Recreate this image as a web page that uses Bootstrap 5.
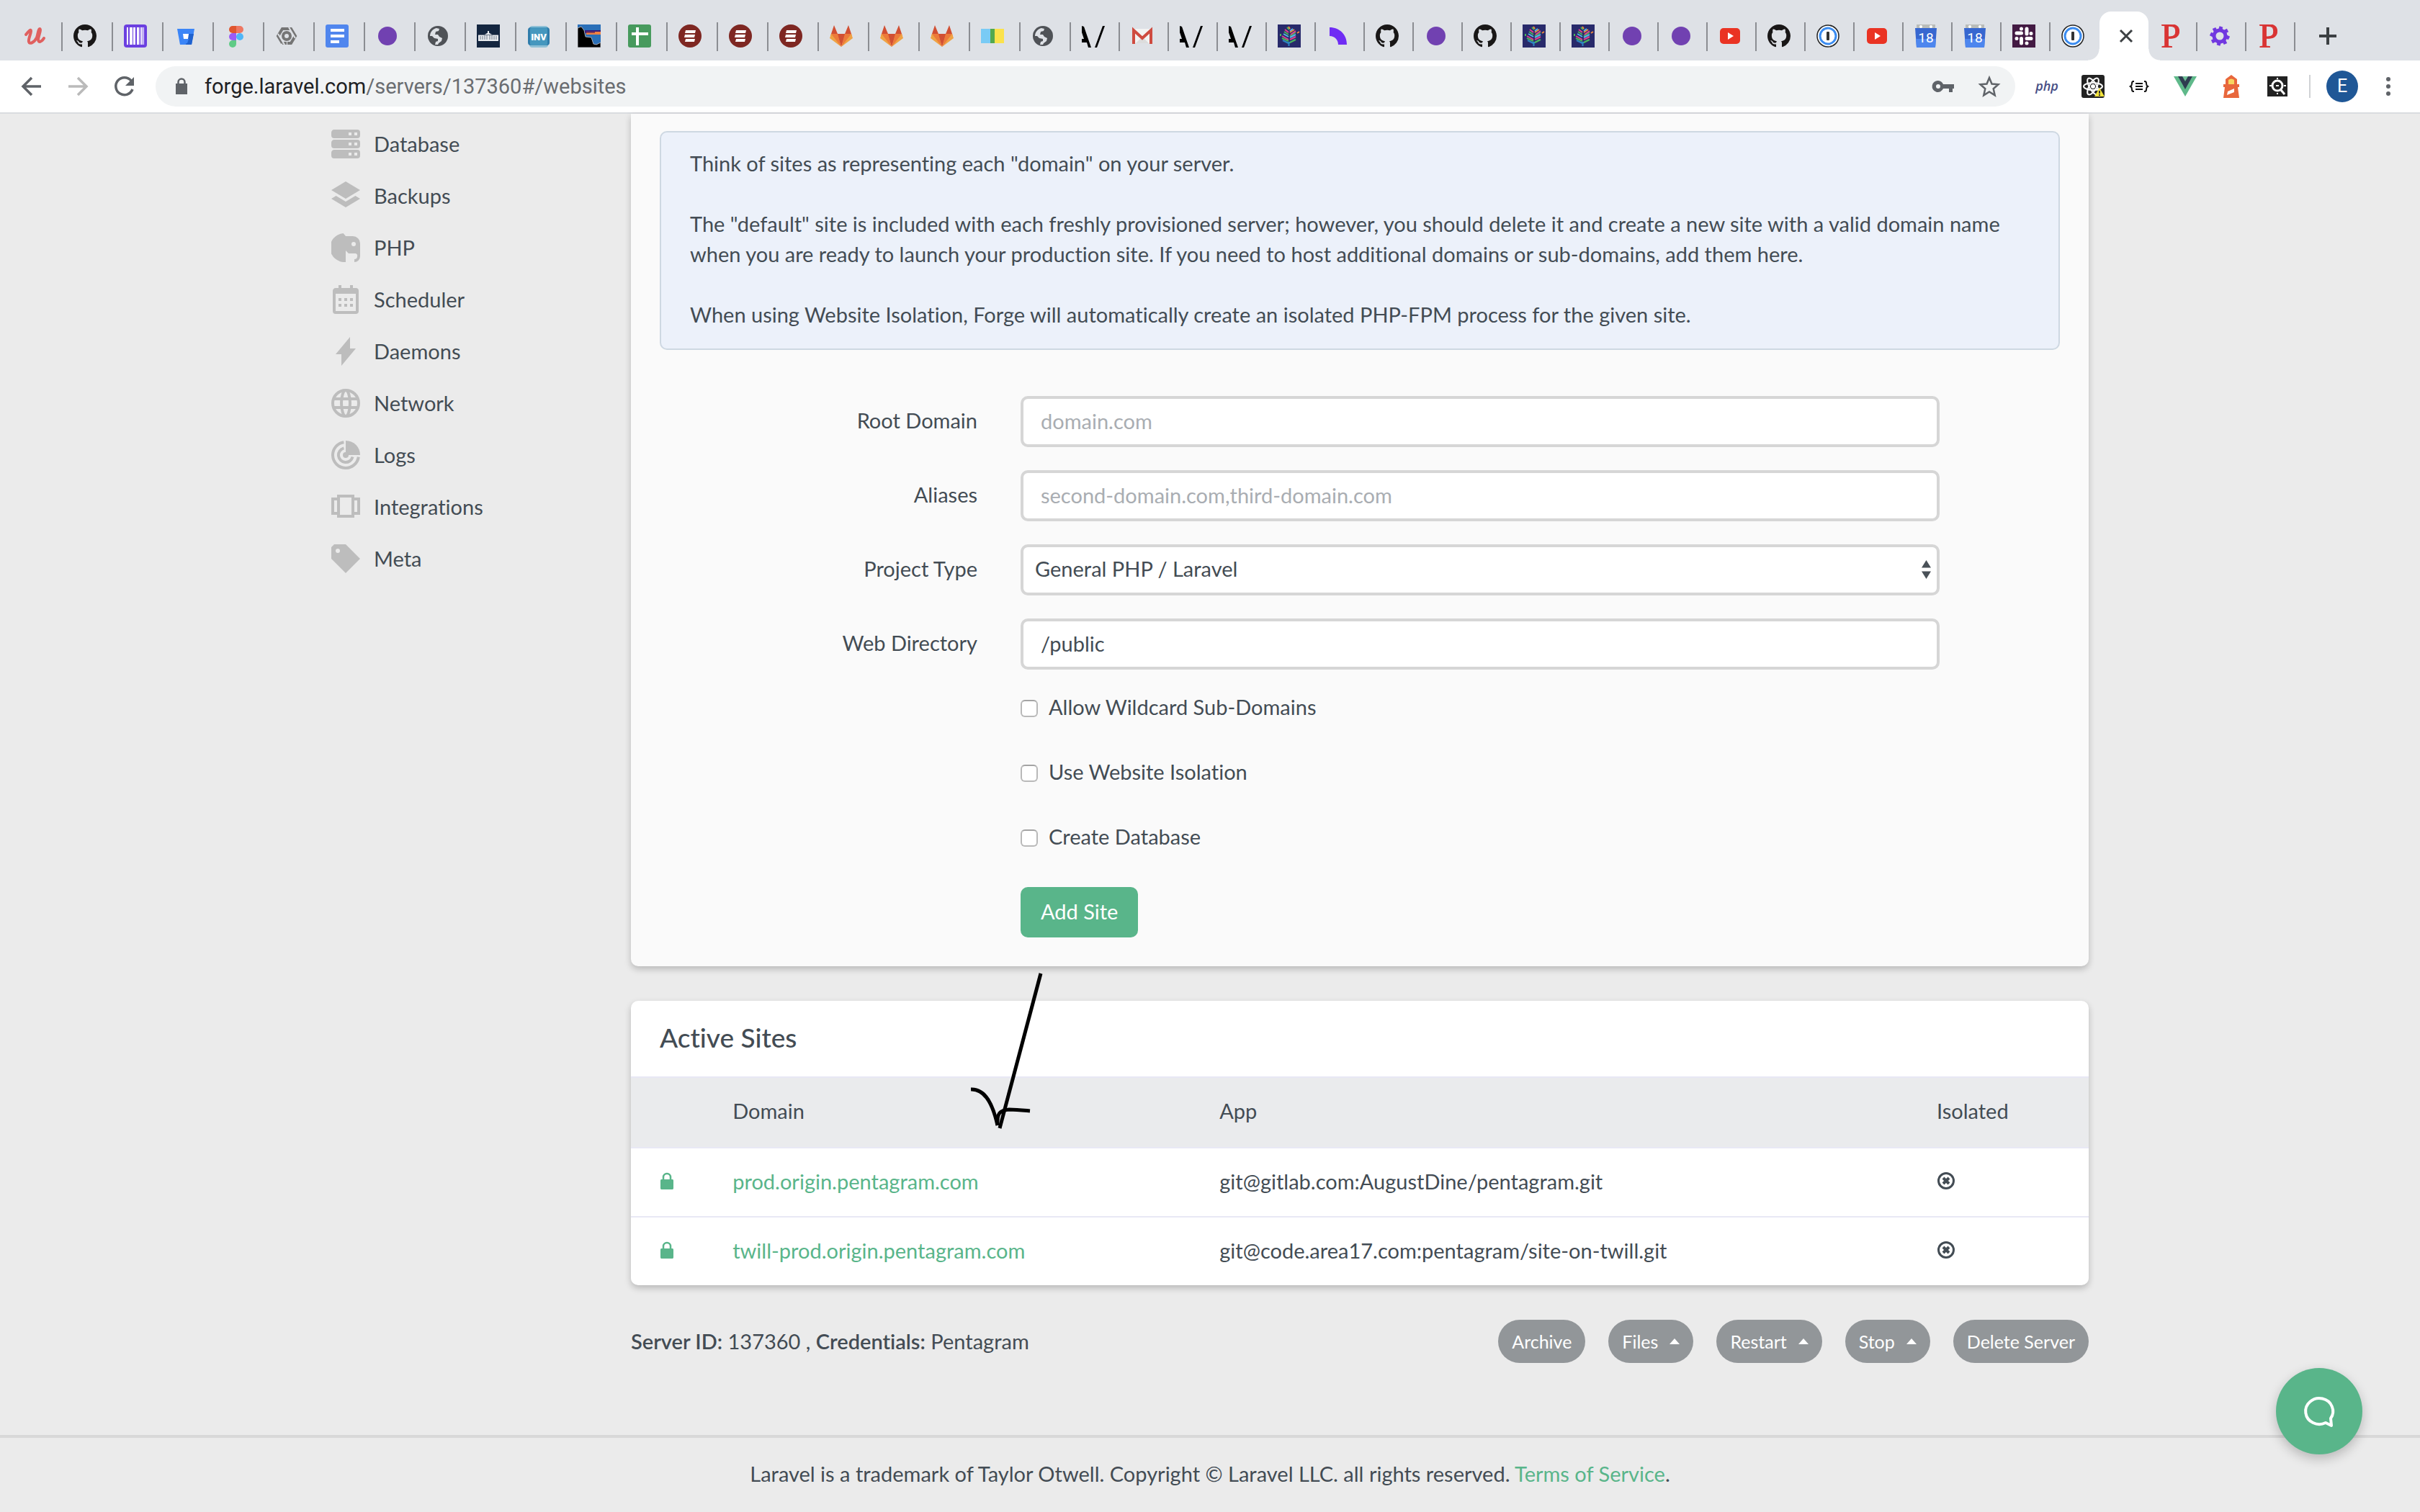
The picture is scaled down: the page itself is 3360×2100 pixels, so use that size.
<!DOCTYPE html>
<html lang="en">
<head>
<meta charset="utf-8">
<meta name="viewport" content="width=device-width, initial-scale=1">
<title>Laravel Forge</title>
<link href="https://cdn.jsdelivr.net/npm/bootstrap@5.3.0/dist/css/bootstrap.min.css" rel="stylesheet">
<style>
:root { --ink: #434c54; --green: #59b58a; --page: #ebebeb; --strip: #dee1e6; }
body { background: var(--page); color: var(--ink); font: 29px/42px Lato, "Open Sans", sans-serif; font-variant-ligatures: none; }
a { color: var(--green); text-decoration: none; }

/* browser window */
.tab-strip { background: var(--strip); height: 84px; padding-left: 17px; }
.tab-item { width: 70px; height: 40px; margin-top: 31px; padding-left: 15px; border-right: 2px solid #8b8d92; flex: none; display: flex; align-items: center; }
.tab-item svg { width: 32px; height: 32px; flex: none; margin-top: -2px; }
.tab-item.slim { width: 68px; }
.tab-item.no-sep { border-color: transparent; }
.tab-open { width: 68px; height: 68px; margin-top: 16px; background: #fff; border: 0; border-radius: 16px 16px 0 0; position: relative; flex: none; padding: 0; color: #3c4043; }
.tab-open::before, .tab-open::after { content: ""; position: absolute; bottom: 0; width: 16px; height: 16px; }
.tab-open::before { right: 100%; background: radial-gradient(circle at 0 0, transparent 15px, #fff 16px); }
.tab-open::after { left: 100%; background: radial-gradient(circle at 100% 0, transparent 15px, #fff 16px); }
.tab-new { height: 40px; margin: 30px 0 0 29px; }
.bare { background: none; border: 0; padding: 0; display: flex; align-items: center; justify-content: center; flex: none; }
.tool-row { background: #fff; height: 74px; border-bottom: 2px solid #dadce0; padding: 0 24px 0 24px; }
.nav-tools { width: 192px; gap: 24px; color: #5f6368; }
.nav-tools svg, .ext-tools svg { width: 40px; height: 40px; }
.omnibox { background: #f1f3f4; height: 56px; border-radius: 28px; padding: 0 16px 0 24px; gap: 20px; color: #5f6368; }
.omnibox .url { font-family: Roboto, "Open Sans", sans-serif; font-size: 29px; color: #6a6d71; }
.omnibox .url b { font-weight: 400; color: #202124; }
.omnibox svg { width: 40px; height: 40px; flex: none; }
.omnibox .padlock { width: 24px; }
.ext-tools { padding-left: 24px; gap: 24px; }
.ext-tools .rule { width: 2px; height: 32px; background: #d0d2d5; }
.avatar-btn { width: 44px; height: 44px; margin: 0 -2px; border-radius: 50%; background: #1f5796; color: #fff; font: 25px/44px Roboto, sans-serif; }

/* app */
.site-wrap { max-width: 2440px; }
.side-menu { width: 416px; flex: none; padding-top: 6px; }
.side-menu a { color: var(--ink); height: 72px; gap: 19px; }
.side-menu svg { width: 40px; height: 40px; fill: #bdbdbd; }
.panel { border-radius: 10px; box-shadow: 0 4px 10px rgba(0,0,0,.22); }
.panel-form { background: #fafafa; border-radius: 0 0 10px 10px; padding: 24px 40px 40px; }
.note { background: #ecf1fa; border: 2px solid #ced8e2; border-radius: 10px; padding: 22px 40px 26px; margin-bottom: 64px; }
.note p { margin-bottom: 42px; }
.form-grid .row { --bs-gutter-x: 60px; margin-bottom: 32px; }
.form-grid .col-form-label { padding-top: 12px; padding-bottom: 0; text-align: right; }
.form-grid .form-control, .form-grid .form-select { height: 71px; border: 4px solid #d6d6d6; border-radius: 10px; padding: 0 24px 3px; background-color: #fff; color: var(--ink); font-size: 29px; line-height: 42px; }
.form-grid .form-control::placeholder { color: #a9adb2; opacity: 1; }
.form-grid .form-select { padding: 0 16px 3px; background-image: none; }
.select-box { position: relative; }
.select-box svg { position: absolute; right: 12px; top: 22px; width: 13px; height: 26px; fill: #4a5158; pointer-events: none; }
.tick-line { height: 42px; margin-bottom: 48px; gap: 15px; }
.tick-line label { padding-bottom: 2px; }
.tick-line .form-check-input { width: 24px; height: 24px; margin: 2px 0 0; border: 2px solid #b9b9b9; border-top-color: #a3a3a3; border-radius: 6px; background: #fff; }
.btn-add { background: var(--green); color: #fff; border: 0; border-radius: 10px; height: 70px; padding: 0 28px 2px; font-size: 29px; line-height: 42px; }
.panel-sites { background: #fff; margin-top: 48px; position: relative; }
.panel-sites h2 { font-size: 37px; line-height: 42px; padding: 30px 40px 33px; margin: 0; }
.site-table { table-layout: fixed; margin: 0; color: var(--ink); --bs-table-bg: transparent; }
.site-table th, .site-table td { font-weight: 400; padding: 25px 0 27px 40px; border: 0; border-top: 2px solid #e8e8f5; color: var(--ink); line-height: 42px; }
.site-table thead th { background: #eaebed; border-bottom: 2px solid #e8e8f5; padding: 25px 0 29px 40px; }
.site-table tbody tr:first-child td { border-top: 0; }
.site-table svg { display: block; margin: 8px 0 10px; }
.site-table th:last-child { padding-left: 39px; }
.arrow-mark { position: absolute; left: 472px; top: -40px; width: 100px; height: 220px; pointer-events: none; }
.server-bar { margin-top: 48px; gap: 32px; }
.server-bar .btn { background: #929699; color: #fff; height: 60px; border: 0; border-radius: 30px; padding: 0 19px; font-size: 25px; line-height: 42px; display: flex; align-items: center; gap: 16px; }
.server-bar .btn svg { width: 14px; height: 8px; fill: #fff; }
.legal { border-top: 4px solid #d8d8d8; margin-top: 100px; padding: 29px 0; }
.chat-btn { position: fixed; right: 80px; bottom: 80px; width: 120px; height: 120px; border-radius: 50%; background: var(--green); border: 0; box-shadow: 0 6px 16px rgba(0,0,0,.22); padding: 0; }
</style>
<script src="https://cdn.jsdelivr.net/npm/bootstrap@5.3.0/dist/js/bootstrap.bundle.min.js"></script>
</head>
<body>

<svg class="d-none" aria-hidden="true">
  <symbol id="f-udemy" viewBox="0 0 32 32"><path d="M4 14C8 9 11 6 11 9c0 4-4 11-3 15 1 4 8 1 11-6 2-5 2-12 4-12 3 0-2 11-2 15 0 5 5 3 8-2" fill="none" stroke="#e0605f" stroke-width="4" stroke-linecap="round" stroke-linejoin="round"/></symbol>
  <symbol id="f-github" viewBox="0 0 16 16"><path fill="#191717" d="M8 0C3.58 0 0 3.58 0 8c0 3.54 2.29 6.53 5.47 7.59.4.07.55-.17.55-.38 0-.19-.01-.82-.01-1.49-2.01.37-2.53-.49-2.69-.94-.09-.23-.48-.94-.82-1.13-.28-.15-.68-.52-.01-.53.63-.01 1.08.58 1.23.82.72 1.21 1.87.87 2.33.66.07-.52.28-.87.51-1.07-1.78-.2-3.64-.89-3.64-3.95 0-.87.31-1.59.82-2.15-.08-.2-.36-1.02.08-2.12 0 0 .67-.21 2.2.82.64-.18 1.32-.27 2-.27s1.36.09 2 .27c1.53-1.04 2.2-.82 2.2-.82.44 1.1.16 1.92.08 2.12.51.56.82 1.27.82 2.15 0 3.07-1.87 3.75-3.65 3.95.29.25.54.73.54 1.48 0 1.07-.01 1.93-.01 2.2 0 .21.15.46.55.38A8.01 8.01 0 0 0 16 8c0-4.42-3.58-8-8-8z"/></symbol>
  <symbol id="f-bars" viewBox="0 0 32 32"><rect width="32" height="32" rx="4" fill="#6b3fe0"/><path fill="#fff" d="M4 4h2v24H4zM8 4h4v24H8zM13 4h3v24h-3zM18 4h3v24h-3zM22 4h1v24h-1zM24 4h2v24h-2zM27 4h1v24h-1z"/></symbol>
  <symbol id="f-bitbucket" viewBox="0 0 32 32"><path fill="#3b85f7" d="M4 6h24l-4 22H8z"/><path fill="#1f62cf" d="M20 13h7l-3 15h-8z"/><path fill="#3b85f7" d="M9 20h11l-2 6h-8z"/><path fill="#fff" d="M12 13h8l-1 7h-6z"/></symbol>
  <symbol id="f-figma" viewBox="0 0 32 32"><path fill="#e0562f" d="M16 2h-5a5 5 0 0 0 0 10h5z"/><path fill="#ee7762" d="M16 2h5a5 5 0 0 1 0 10h-5z"/><path fill="#9b5cf6" d="M16 12h-5a5 5 0 0 0 0 10h5z"/><circle cx="21" cy="17" r="5" fill="#4fb6f8"/><path fill="#5fcb86" d="M16 22h-5a5 5 0 1 0 5 5z"/></symbol>
  <symbol id="f-hex" viewBox="0 0 32 32"><g fill="none" stroke="#757575" stroke-width="4"><path d="M15 6H10L4 16l6 10M17 26h5l6-10-6-10H11M10 26h6"/><circle cx="16" cy="16" r="5"/></g><path stroke="#dee1e6" stroke-width="2" d="M19 4l9 15M13 28 4 13"/></symbol>
  <symbol id="f-docs" viewBox="0 0 32 32"><rect width="32" height="32" rx="3" fill="#5086ee"/><path fill="#fff" d="M7 6h19v4H7zM7 14h19v4H7zM7 22h12v4H7z"/></symbol>
  <symbol id="f-dot" viewBox="0 0 32 32"><circle cx="16" cy="16" r="13" fill="#7141b1"/></symbol>
  <symbol id="f-globe" viewBox="0 0 32 32"><circle cx="16" cy="16" r="14" fill="#4f5257"/><path fill="#dee1e6" d="M5 16c0-5 4-10 9-11l4 1-1 3-4 1-1 4h4l2 3 4 2-1 4-4 3-1 2h-4l1-4 3-1v-3l-5-1-3-3z"/></symbol>
  <symbol id="f-house" viewBox="0 0 32 32"><path fill="#142640" d="M0 0h32v32H0z"/><path fill="#e8ebef" d="M2 14h9l5-3 5 3h9v9H2zM15 9h2v3h-2z"/><path stroke="#6b7686" d="M5 16v5M8 16v5M11 15v6M14 15v6M18 15v6M21 15v6M24 16v5M27 16v5M2 14.500h28"/></symbol>
  <symbol id="f-inv" viewBox="0 0 32 32"><rect x="3" y="2" width="26" height="30" rx="4" fill="#8fc0d6"/><rect x="1" y="4" width="30" height="25" rx="4" fill="#2f7cab"/><rect x="4" y="4" width="24" height="25" rx="2" fill="#4597be"/><text x="16" y="22" text-anchor="middle" font-family="Roboto" font-weight="900" font-size="13" fill="#fff">INV</text></symbol>
  <symbol id="f-ridge" viewBox="0 0 32 32"><path fill="#2a6fb8" d="M0 0h32v32H0z"/><path fill="#351a7c" d="M10 8h22v4H10z"/><path fill="#ef8144" d="M12 10h20v4H12z"/><path fill="#8a3b54" d="M12 10h12v2H12z"/><path d="M0 5l5-2 4 5 2 9 8 1 3 9 4 1 6-3v7H0z" stroke="#a8a8b0"/></symbol>
  <symbol id="f-sheet" viewBox="0 0 32 32"><rect width="32" height="32" rx="3" fill="#479a5d"/><path fill="#fff" d="M11 4h4v25h-4zM5 11h23v4H5z"/></symbol>
  <symbol id="f-red" viewBox="0 0 32 32"><circle cx="16" cy="16" r="16" fill="#7e2722"/><path fill="#fff" d="M10 8h14l-1 4H9zM9 14h14l-1 4H8zM10 20h13l-1 4H9z"/></symbol>
  <symbol id="f-gitlab" viewBox="0 0 32 32"><path fill="#d14f33" d="M6 1l5 12H2zM26 1l4 12h-9zM10 13h12l-6 18z"/><path fill="#ec7a3b" d="M2 13h9l5 18L1 16zM30 13h-9l-5 18 15-15z"/><path fill="#efa345" d="M2 13l-2 6 16 12zM30 13l2 6-16 12z"/></symbol>
  <symbol id="f-flag" viewBox="0 0 32 32"><path fill="#79cbf5" d="M0 6h13v20H0z"/><path fill="#53a94f" d="M13 6h6v20h-6z"/><path fill="#fbe24c" d="M19 6h13v20H19z"/></symbol>
  <symbol id="f-slashes" viewBox="0 0 32 32"><path d="M0 2l3 1 10 29H9L7 25H0v-5h3L0 11zM29 2h3L21 32h-3z"/></symbol>
  <symbol id="f-gmail" viewBox="0 0 32 32"><path fill="#f3f3f3" d="M3 6h26v20H3z"/><path fill="#dcdcdc" d="M7 26l9-9 9 9z"/><path fill="none" stroke="#cf4b40" stroke-width="4" d="M4 27V8l12 11L28 8v19"/></symbol>
  <symbol id="f-tree" viewBox="0 0 32 32"><path fill="#282a6b" d="M0 0h32v32H0z"/><g fill="none" stroke-width="2"><path stroke="#2d86c4" d="M15.500 30v-6M7 22l8 4 9-5"/><path stroke="#4cb35a" d="M4 13v3M6 19l9 4M17 25l8-4M9 10l6 4M17 16l8-5M13 4l3 3"/><path stroke="#e0418f" d="M6 16l9 5M17 21l8-4M10 7l5 4M18 14l7-5"/><path stroke="#f08a3c" d="M15 3l2 3M17 11l6-4M27 12l3-2"/><path stroke="#57b7e8" d="M8 13l7 4M17 9l4-3M17 18l8-4"/></g></symbol>
  <symbol id="f-arc" viewBox="0 0 32 32"><path fill="#6f2cf4" d="M4 4c14 0 24 10 24 24H16c0-7-5-12-12-12z"/></symbol>
  <symbol id="f-video" viewBox="0 0 32 32"><rect x="2" y="5" width="28" height="22" rx="5" fill="#ea3323"/><path fill="#fff" d="M13 11l8 5-8 5z"/></symbol>
  <symbol id="f-onepass" viewBox="0 0 32 32"><circle cx="16" cy="16" r="15" fill="#fff" stroke="#222" stroke-width="1.500"/><circle cx="16" cy="16" r="11" fill="#fff" stroke="#3b8cf0" stroke-width="3"/><rect x="14" y="10" width="4" height="12" rx="1" fill="#333"/></symbol>
  <symbol id="f-cal" viewBox="0 0 32 32"><path fill="#b9bcb9" d="M3 0h26v6H3z"/><circle cx="9" cy="3" r="2" fill="#fff"/><circle cx="23" cy="3" r="2" fill="#fff"/><path fill="#3767d0" d="M1 5h30l-2 27H3z"/><path fill="#4d86ee" d="M2 20h28l-1 12H3z"/><text x="16" y="25" text-anchor="middle" font-family="Roboto" font-size="19" fill="#fff">18</text></symbol>
  <symbol id="f-slack" viewBox="0 0 32 32"><path fill="#431a43" d="M0 0h32v32H0z"/><g stroke="#fff" stroke-width="5" stroke-linecap="round"><path d="M12.500 6v0M12.500 12H6M20 6v7M26 12.500v0M6 19.500v0M12.500 19.500V26M20 19.500h6M20 26v0"/></g></symbol>
  <symbol id="f-p" viewBox="0 0 32 32"><text x="16" y="32" text-anchor="middle" font-family="Liberation Serif" font-size="49" fill="#d93434" stroke="#d93434">P</text></symbol>
  <symbol id="f-pinwheel" viewBox="0 0 32 32"><g fill="none" stroke="#7138e0" stroke-width="5"><circle cx="16" cy="16" r="8"/><path d="M16 9l2-6M21 11l6-3M23 16l6 3M21 21l3 6M16 23l-2 6M11 21l-6 3M9 16l-6-3M11 11L8 5"/></g></symbol>
</svg>

<header>
  <nav class="tab-strip d-flex" aria-label="Open tabs">
    <a class="tab-item" href="#"><svg><use href="#f-udemy"/></svg></a>
    <a class="tab-item" href="#"><svg><use href="#f-github"/></svg></a>
    <a class="tab-item" href="#"><svg><use href="#f-bars"/></svg></a>
    <a class="tab-item" href="#"><svg><use href="#f-bitbucket"/></svg></a>
    <a class="tab-item" href="#"><svg><use href="#f-figma"/></svg></a>
    <a class="tab-item" href="#"><svg><use href="#f-hex"/></svg></a>
    <a class="tab-item" href="#"><svg><use href="#f-docs"/></svg></a>
    <a class="tab-item" href="#"><svg><use href="#f-dot"/></svg></a>
    <a class="tab-item" href="#"><svg><use href="#f-globe"/></svg></a>
    <a class="tab-item" href="#"><svg><use href="#f-house"/></svg></a>
    <a class="tab-item" href="#"><svg><use href="#f-inv"/></svg></a>
    <a class="tab-item" href="#"><svg><use href="#f-ridge"/></svg></a>
    <a class="tab-item" href="#"><svg><use href="#f-sheet"/></svg></a>
    <a class="tab-item" href="#"><svg><use href="#f-red"/></svg></a>
    <a class="tab-item" href="#"><svg><use href="#f-red"/></svg></a>
    <a class="tab-item" href="#"><svg><use href="#f-red"/></svg></a>
    <a class="tab-item" href="#"><svg><use href="#f-gitlab"/></svg></a>
    <a class="tab-item" href="#"><svg><use href="#f-gitlab"/></svg></a>
    <a class="tab-item" href="#"><svg><use href="#f-gitlab"/></svg></a>
    <a class="tab-item" href="#"><svg><use href="#f-flag"/></svg></a>
    <a class="tab-item" href="#"><svg><use href="#f-globe"/></svg></a>
    <a class="tab-item slim" href="#"><svg><use href="#f-slashes"/></svg></a>
    <a class="tab-item slim" href="#"><svg><use href="#f-gmail"/></svg></a>
    <a class="tab-item slim" href="#"><svg><use href="#f-slashes"/></svg></a>
    <a class="tab-item slim" href="#"><svg><use href="#f-slashes"/></svg></a>
    <a class="tab-item slim" href="#"><svg><use href="#f-tree"/></svg></a>
    <a class="tab-item slim" href="#"><svg><use href="#f-arc"/></svg></a>
    <a class="tab-item slim" href="#"><svg><use href="#f-github"/></svg></a>
    <a class="tab-item slim" href="#"><svg><use href="#f-dot"/></svg></a>
    <a class="tab-item slim" href="#"><svg><use href="#f-github"/></svg></a>
    <a class="tab-item slim" href="#"><svg><use href="#f-tree"/></svg></a>
    <a class="tab-item slim" href="#"><svg><use href="#f-tree"/></svg></a>
    <a class="tab-item slim" href="#"><svg><use href="#f-dot"/></svg></a>
    <a class="tab-item slim" href="#"><svg><use href="#f-dot"/></svg></a>
    <a class="tab-item slim" href="#"><svg><use href="#f-video"/></svg></a>
    <a class="tab-item slim" href="#"><svg><use href="#f-github"/></svg></a>
    <a class="tab-item slim" href="#"><svg><use href="#f-onepass"/></svg></a>
    <a class="tab-item slim" href="#"><svg><use href="#f-video"/></svg></a>
    <a class="tab-item slim" href="#"><svg><use href="#f-cal"/></svg></a>
    <a class="tab-item slim" href="#"><svg><use href="#f-cal"/></svg></a>
    <a class="tab-item slim" href="#"><svg><use href="#f-slack"/></svg></a>
    <a class="tab-item slim no-sep" href="#"><svg><use href="#f-onepass"/></svg></a>
    <button class="tab-open d-flex align-items-center justify-content-center" type="button" aria-label="Close tab"><svg width="40" height="32" viewBox="0 0 40 32"><path d="M15 8l16 16M31 8L15 24" stroke="currentColor" stroke-width="3"/></svg></button>
    <a class="tab-item slim" href="#"><svg><use href="#f-p"/></svg></a>
    <a class="tab-item slim" href="#"><svg><use href="#f-pinwheel"/></svg></a>
    <a class="tab-item slim" href="#"><svg><use href="#f-p"/></svg></a>
    <button class="bare tab-new" type="button" aria-label="New tab"><svg width="32" height="32" viewBox="0 0 32 32"><path d="M16 4v24M4 16h24" stroke="#3c4043" stroke-width="4"/></svg></button>
  </nav>

  <div class="tool-row d-flex align-items-center">
    <div class="nav-tools d-flex align-items-center">
      <button class="bare" type="button" aria-label="Back"><svg viewBox="0 0 40 40"><path d="M33 20H9M20 8L8 20l12 12" fill="none" stroke="#5f6368" stroke-width="3.500"/></svg></button>
      <button class="bare" type="button" aria-label="Forward"><svg viewBox="0 0 40 40"><path d="M7 20h24M20 8l12 12-12 12" fill="none" stroke="#bababa" stroke-width="3.500"/></svg></button>
      <button class="bare" type="button" aria-label="Reload"><svg viewBox="0 0 40 40"><path d="M30 12A12 12 0 1 0 32 24" fill="none" stroke="#5f6368" stroke-width="3.500"/><path fill="#5f6368" d="M34 7v12H22z"/></svg></button>
    </div>
    <div class="omnibox d-flex align-items-center flex-fill">
      <svg class="padlock" viewBox="0 0 24 40"><path fill="#5f6368" d="M4 16h16v15H4z"/><path d="M7.500 17v-3a4.500 4.500 0 0 1 9 0v3" fill="none" stroke="#5f6368" stroke-width="2.500"/></svg>
      <span class="url flex-fill"><b>forge.laravel.com</b>/servers/137360#/websites</span>
      <button class="bare me-1" type="button" aria-label="Saved passwords"><svg viewBox="0 0 40 40"><path fill="#5f6368" fill-rule="evenodd" d="M13 12a8 8 0 1 0 7 11h8v5h5v-5h2v-6H20a8 8 0 0 0-7-5zm0 5a3 3 0 1 1 0 6 3 3 0 0 1 0-6z"/></svg></button>
      <button class="bare" type="button" aria-label="Bookmark"><svg viewBox="0 0 40 40"><path fill="none" stroke="#5f6368" stroke-width="2.500" d="M20 8l3.500 8.500 9 .8-6.800 6 2 9L20 27.500l-7.700 4.800 2-9-6.800-6 9-.8z"/></svg></button>
    </div>
    <div class="ext-tools d-flex align-items-center">
      <button class="bare" type="button" aria-label="PHP console"><svg viewBox="0 0 40 40"><text x="20" y="26" text-anchor="middle" font-family="Open Sans" font-style="italic" font-weight="600" font-size="18" fill="#484f86">php</text></svg></button>
      <button class="bare" type="button" aria-label="React tools"><svg viewBox="0 0 40 40"><rect x="4" y="4" width="32" height="32" rx="3" fill="#222"/><g fill="none" stroke="#fff" stroke-width="2"><ellipse cx="20" cy="20" rx="13" ry="5"/><ellipse cx="20" cy="20" rx="13" ry="5" transform="rotate(60 20 20)"/><ellipse cx="20" cy="20" rx="13" ry="5" transform="rotate(120 20 20)"/></g><circle cx="20" cy="20" r="3" fill="#fff"/><path fill="#f3e33b" d="M29 22l7 12H22z"/><path stroke="#333" stroke-width="2" d="M29 26v4M29 31v2"/></svg></button>
      <button class="bare" type="button" aria-label="JSON viewer"><svg viewBox="0 0 40 40"><g fill="none" stroke="#111" stroke-width="2"><path d="M13 13h-1q-2 0-2 3t-2 4q2 1 2 4t2 3h1M27 13h1q2 0 2 3t2 4q-2 1-2 4t-2 3h-1M15 16h10M15 20h10M15 24h10"/></g></svg></button>
      <button class="bare" type="button" aria-label="Vue tools"><svg viewBox="0 0 40 40"><path fill="#5fb98a" d="M4 6h32L20 34z"/><path fill="#2f3b50" d="M10 6h20L20 24z"/><path fill="#6fbf96" d="M16 6h8l-4 7z"/></svg></button>
      <button class="bare" type="button" aria-label="Lighthouse"><svg viewBox="0 0 40 40"><path fill="#e8673c" d="M20 4l8 6v7h3v4h-2l2 15H9l2-15H9v-4h3v-7z"/><path fill="#f7d560" d="M16 11q4-3 8 0v6h-8z"/><path fill="#fff" d="M15 27l9-4v5l-10 4z"/></svg></button>
      <button class="bare" type="button" aria-label="Inspector"><svg viewBox="0 0 40 40"><path fill="#222" d="M6 6h28v28H6z"/><path fill="none" stroke="#fff" stroke-width="3" d="M25 25l5 6"/><circle cx="20" cy="19" r="7" fill="none" stroke="#fff" stroke-width="3"/><path d="M18 19h4M9 19h3M29 19h3M20 8v2M20 29v2" stroke="#fff" stroke-width="2"/></svg></button>
      <span class="rule"></span>
      <button class="bare avatar-btn" type="button">E</button>
      <button class="bare" type="button" aria-label="Menu"><svg viewBox="0 0 40 40" fill="#5f6368"><circle cx="20" cy="10" r="3"/><circle cx="20" cy="20" r="3"/><circle cx="20" cy="30" r="3"/></svg></button>
    </div>
  </div>
</header>

<div class="site-wrap mx-auto d-flex align-items-start">
  <nav class="side-menu d-flex flex-column" aria-label="Server">
    <a class="d-flex align-items-center" href="#"><svg viewBox="0 0 20 20"><path fill-rule="evenodd" d="M0 2C0 .9.9 0 2 0h16a2 2 0 0 1 2 2v2a2 2 0 0 1-2 2H2a2 2 0 0 1-2-2zm0 7c0-1.100.9-2 2-2h16a2 2 0 0 1 2 2v2a2 2 0 0 1-2 2H2a2 2 0 0 1-2-2zm0 7c0-1.100.9-2 2-2h16a2 2 0 0 1 2 2v2a2 2 0 0 1-2 2H2a2 2 0 0 1-2-2zM12 2v2h2V2zm4 0v2h2V2zm-4 7v2h2V9zm4 0v2h2V9zm-4 7v2h2v-2zm4 0v2h2v-2z"/></svg>Database</a>
    <a class="d-flex align-items-center" href="#"><svg viewBox="0 0 20 20"><path d="M10 0l10 6-10 6L0 6zm6.700 10L20 12l-10 6-10-6 3.300-2 6.700 4z"/></svg>Backups</a>
    <a class="d-flex align-items-center" href="#"><svg viewBox="0 0 20 20"><path fill-rule="evenodd" d="M10 20v-8l2 2h4.500a1.500 1.500 0 0 1 1.500 2 2 2 0 0 1-2 2v2a4 4 0 0 0 4-4V7a5 5 0 0 0-5-5h-5L8.300 0A10 10 0 0 0 10 20zm5.500-11a1.500 1.500 0 1 1 0-3 1.500 1.500 0 0 1 0 3z"/></svg>PHP</a>
    <a class="d-flex align-items-center" href="#"><svg viewBox="0 0 20 20"><path fill-rule="evenodd" d="M1 4c0-1.100.9-2 2-2h2V0h2v2h6V0h2v2h2a2 2 0 0 1 2 2v14a2 2 0 0 1-2 2H3a2 2 0 0 1-2-2zm2 2v12h14V6zm2 3h2v2H5zm0 4h2v2H5zm4-4h2v2H9zm0 4h2v2H9zm4-4h2v2h-2zm0 4h2v2h-2z"/></svg>Scheduler</a>
    <a class="d-flex align-items-center" href="#"><svg viewBox="0 0 20 20"><path d="M13 8V0L3 12h4v8l10-12z"/></svg>Daemons</a>
    <a class="d-flex align-items-center" href="#"><svg viewBox="0 0 20 20"><g fill="none" stroke="#bdbdbd" stroke-width="2"><circle cx="10" cy="10" r="9"/><ellipse cx="10" cy="10" rx="3" ry="9"/><path d="M2 7h16M2 13h16"/></g></svg>Network</a>
    <a class="d-flex align-items-center" href="#"><svg viewBox="0 0 20 20"><path d="M10 0a10 10 0 0 1 10 10H10z"/><circle cx="10" cy="10" r="2"/><g fill="none" stroke="#bdbdbd" stroke-width="2"><path d="M8.700 1.100a9 9 0 1 0 10.200 10.200M8.700 5.200a5 5 0 1 0 6.100 6.100"/></g></svg>Logs</a>
    <a class="d-flex align-items-center" href="#"><svg viewBox="0 0 20 20"><path fill="none" stroke="#bdbdbd" stroke-width="2" d="M5 3h10v14H5zM5 5H1v10h4M15 5h4v10h-4" transform="translate(0 -.5)"/></svg>Integrations</a>
    <a class="d-flex align-items-center" href="#"><svg viewBox="0 0 20 20"><path fill-rule="evenodd" d="M0 10V2l2-2h8l10 10-10 10zm4.500-4a1.500 1.500 0 1 0 0-3 1.500 1.500 0 0 0 0 3z"/></svg>Meta</a>
  </nav>

  <main class="flex-fill">
    <section class="panel panel-form">
      <div class="note mt-0">
        <p>Think of sites as representing each "domain" on your server.</p>
        <p>The "default" site is included with each freshly provisioned server; however, you should delete it and create a new site with a valid domain name when you are ready to launch your production site. If you need to host additional domains or sub-domains, add them here.</p>
        <p class="mb-0">When using Website Isolation, Forge will automatically create an isolated PHP-FPM process for the given site.</p>
      </div>
      <form class="form-grid">
        <div class="row">
          <label class="col-3 col-form-label" for="domain">Root Domain</label>
          <div class="col-8"><input class="form-control" id="domain" type="text" placeholder="domain.com"></div>
        </div>
        <div class="row">
          <label class="col-3 col-form-label" for="aliases">Aliases</label>
          <div class="col-8"><input class="form-control" id="aliases" type="text" placeholder="second-domain.com,third-domain.com"></div>
        </div>
        <div class="row">
          <label class="col-3 col-form-label" for="ptype">Project Type</label>
          <div class="col-8"><div class="select-box"><select class="form-select" id="ptype"><option>General PHP / Laravel</option></select><svg viewBox="0 0 13 26"><path d="M6.500 0L13 10.500H0zM6.500 26L13 15.500H0z"/></svg></div></div>
        </div>
        <div class="row">
          <label class="col-3 col-form-label" for="webdir">Web Directory</label>
          <div class="col-8"><input class="form-control" id="webdir" type="text" value="/public"></div>
        </div>
        <div class="row mb-0">
          <div class="col-8 offset-3">
            <div class="tick-line d-flex align-items-center"><input class="form-check-input" id="wild" type="checkbox"><label for="wild">Allow Wildcard Sub-Domains</label></div>
            <div class="tick-line d-flex align-items-center"><input class="form-check-input" id="isol" type="checkbox"><label for="isol">Use Website Isolation</label></div>
            <div class="tick-line d-flex align-items-center"><input class="form-check-input" id="mkdb" type="checkbox"><label for="mkdb">Create Database</label></div>
            <button class="btn btn-add" type="button">Add Site</button>
          </div>
        </div>
      </form>
    </section>

    <section class="panel panel-sites">
      <h2>Active Sites</h2>
      <table class="table site-table">
        <colgroup><col style="width:5%"><col style="width:33.4%"><col style="width:49.25%"><col></colgroup>
        <thead><tr><th></th><th>Domain</th><th>App</th><th>Isolated</th></tr></thead>
        <tbody>
          <tr>
            <td><svg width="20" height="24" viewBox="0 0 20 24"><path fill="#59b58a" d="M2 10h16a2 2 0 0 1 1 2v10a2 2 0 0 1-1 2H2a2 2 0 0 1-1-2V12a2 2 0 0 1 1-2z"/><path d="M5 11V7a5 5 0 0 1 10 0v4" fill="none" stroke="#59b58a" stroke-width="2.500"/></svg></td>
            <td><a href="#">prod.origin.pentagram.com</a></td><td>git@gitlab.com:AugustDine/pentagram.git</td>
            <td><svg width="24" height="24" viewBox="0 0 24 24"><g fill="none" stroke="#434c54"><circle cx="12" cy="12" r="10.500" stroke-width="3"/><path stroke-width="4" d="M8 8l8 8M16 8l-8 8"/></g></svg></td>
          </tr>
          <tr>
            <td><svg width="20" height="24" viewBox="0 0 20 24"><path fill="#59b58a" d="M2 10h16a2 2 0 0 1 1 2v10a2 2 0 0 1-1 2H2a2 2 0 0 1-1-2V12a2 2 0 0 1 1-2z"/><path d="M5 11V7a5 5 0 0 1 10 0v4" fill="none" stroke="#59b58a" stroke-width="2.500"/></svg></td>
            <td><a href="#">twill-prod.origin.pentagram.com</a></td><td>git@code.area17.com:pentagram/site-on-twill.git</td>
            <td><svg width="24" height="24" viewBox="0 0 24 24"><g fill="none" stroke="#434c54"><circle cx="12" cy="12" r="10.500" stroke-width="3"/><path stroke-width="4" d="M8 8l8 8M16 8l-8 8"/></g></svg></td>
          </tr>
        </tbody>
      </table>
      <svg class="arrow-mark" viewBox="0 0 100 220"><g fill="none" stroke="#000" stroke-width="5"><path d="M97 2L40 217"/><path d="M0 163C21 162 31 186 37 213"/><path d="M37 213C36 196 40 192 53 191C64 191 72 192 82 193"/></g></svg>
    </section>

    <div class="server-bar d-flex align-items-center">
      <div class="flex-fill"><b class="fw-semibold">Server ID:</b> 137360 , <b class="fw-semibold">Credentials:</b> Pentagram</div>
      <button class="btn" type="button">Archive</button>
      <button class="btn" type="button">Files <svg viewBox="0 0 14 8"><path d="M7 0l7 8H0z"/></svg></button>
      <button class="btn" type="button">Restart <svg viewBox="0 0 14 8"><path d="M7 0l7 8H0z"/></svg></button>
      <button class="btn" type="button">Stop <svg viewBox="0 0 14 8"><path d="M7 0l7 8H0z"/></svg></button>
      <button class="btn" type="button">Delete Server</button>
    </div>
  </main>
</div>

<footer class="legal text-center">Laravel is a trademark of Taylor Otwell. Copyright © Laravel LLC. all rights reserved. <a href="#">Terms of Service</a>.</footer>

<button class="chat-btn" type="button" aria-label="Open chat"><svg width="50" height="46" viewBox="0 0 50 46"><path d="M42 42l-8-4A19 18 0 1 1 41 32z" fill="none" stroke="#fff" stroke-width="4" stroke-linejoin="round"/></svg></button>
</body>
</html>
